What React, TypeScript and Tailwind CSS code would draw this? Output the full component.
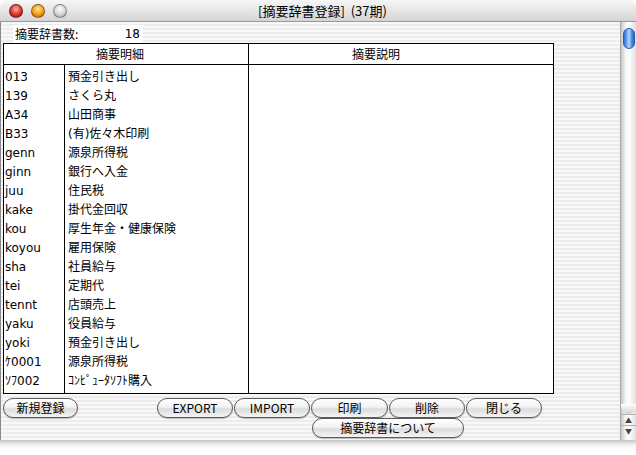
import React from "react";

type Entry = { code: string; name: string };

const entries: Entry[] = [
	{ code: "013", name: "預金引き出し" },
	{ code: "139", name: "さくら丸" },
	{ code: "A34", name: "山田商事" },
	{ code: "B33", name: "(有)佐々木印刷" },
	{ code: "genn", name: "源泉所得税" },
	{ code: "ginn", name: "銀行へ入金" },
	{ code: "juu", name: "住民税" },
	{ code: "kake", name: "掛代金回収" },
	{ code: "kou", name: "厚生年金・健康保険" },
	{ code: "koyou", name: "雇用保険" },
	{ code: "sha", name: "社員給与" },
	{ code: "tei", name: "定期代" },
	{ code: "tennt", name: "店頭売上" },
	{ code: "yaku", name: "役員給与" },
	{ code: "yoki", name: "預金引き出し" },
	{ code: "ｹ0001", name: "源泉所得税" },
	{ code: "ｿﾌ002", name: "ｺﾝﾋﾟｭｰﾀｿﾌﾄ購入" },
];

const rowFont = { fontFamily: '"DejaVu Sans", "Noto Sans CJK JP", sans-serif' };

const AquaButton: React.FC<{ label: string; className?: string }> = ({
	label,
	className = "",
}) => (
	<button
		className={`h-[20px] p-0 flex items-center justify-center whitespace-nowrap rounded-full border border-[#5a5a5a] bg-[linear-gradient(to_bottom,#ffffff_0%,#f2f2f2_45%,#dcdcdc_55%,#f4f4f4_100%)] shadow-[0_1px_1px_rgba(0,0,0,0.25)] text-[12px] leading-none text-black ${className}`}
	>
		{label}
	</button>
);

const Light: React.FC<{ tone: string }> = ({ tone }) => (
	<div
		className={`w-[14px] h-[14px] rounded-full border border-[rgba(0,0,0,0.35)] ${tone}`}
	/>
);

const Scrollbar: React.FC = () => (
	<div className="w-[16px] flex flex-col bg-[linear-gradient(to_right,#c8c8c8,#f4f4f4_30%,#ffffff_55%,#e0e0e0_100%)] border-l border-[#a8a8a8]">
		<div className="mx-auto mt-[6px] w-[12px] h-[21px] rounded-full border border-[#2a5aa8] bg-[linear-gradient(to_right,#2b6fd6,#7fb4f5_35%,#b9dafc_50%,#4f92ea_75%,#2662c8)]" />
		<div className="flex-1" />
		<div className="h-[10px] rounded-b-full bg-[linear-gradient(to_bottom,#ffffff,#d0d0d0)]" />
		<div className="h-[11px] flex items-center justify-center border-t border-[#b0b0b0] text-[7px] leading-none text-[#444]">
			▲
		</div>
		<div className="h-[11px] flex items-center justify-center border-t border-[#b0b0b0] text-[7px] leading-none text-[#444]">
			▼
		</div>
		<div className="h-[4px]" />
	</div>
);

export default function App() {
	return (
		<div
			className="w-[636px] h-[455px] flex flex-col bg-white overflow-hidden text-black"
			style={{ fontFamily: '"Noto Sans CJK JP", "Liberation Sans", sans-serif' }}
		>
			<div className="h-[22px] flex items-center relative rounded-t-[7px] border-b border-[#9a9a9a] bg-[linear-gradient(to_bottom,#f6f6f6,#e6e6e6_50%,#d4d4d4)]">
				<div className="flex items-center gap-[8px] pl-[9px]">
					<Light tone="bg-[radial-gradient(circle_at_50%_35%,#ffb0a8,#d8322a_55%,#8a1410)]" />
					<Light tone="bg-[radial-gradient(circle_at_50%_35%,#ffe7a0,#f39a12_55%,#a85a00)]" />
					<Light tone="bg-[radial-gradient(circle_at_50%_35%,#ffffff,#d4d4d4_55%,#9a9a9a)]" />
				</div>
				<div className="flex-1 text-center text-[13px] leading-none pr-[58px] whitespace-pre">
					[摘要辞書登録]  (37期)
				</div>
			</div>

			<div className="h-[418px] flex border-l border-[#8a8a8a] bg-[repeating-linear-gradient(to_bottom,#f8f8f8_0px,#f8f8f8_2px,#ececec_2px,#ececec_4px)]">
				<div className="flex-1 flex flex-col pl-[2px]">
					<div className="h-[21px] pt-[3px] pl-[10px]">
						<div className="w-[130px] h-[18px] bg-white flex items-center justify-between px-[2px] text-[12px]">
							<span>摘要辞書数:</span>
							<span className="pr-[1px]" style={rowFont}>
								18
							</span>
						</div>
					</div>

					<div className="w-[551px] h-[351px] border border-black bg-white flex flex-col">
						<div className="h-[21px] flex border-b border-black text-[12px]">
							<div className="w-[245px] border-r border-black flex items-center justify-center pr-[12px]">
								摘要明細
							</div>
							<div className="flex-1 flex items-center justify-center pr-[50px]">
								摘要説明
							</div>
						</div>
						<div className="flex-1 flex overflow-hidden" style={rowFont}>
							<div className="w-[245px] flex border-r border-black">
								<div className="w-[61px] border-r border-black pt-[3px]">
									{entries.map((e) => (
										<div
											key={e.code}
											className="h-[19px] pl-[1px] text-[12px] leading-[19px] whitespace-nowrap"
										>
											{e.code}
										</div>
									))}
								</div>
								<div className="flex-1 pt-[3px]">
									{entries.map((e) => (
										<div
											key={e.code}
											className="h-[19px] pl-[3px] text-[12px] leading-[19px] whitespace-nowrap"
										>
											{e.name}
										</div>
									))}
								</div>
							</div>
							<div className="flex-1" />
						</div>
					</div>

					<div className="flex items-center mt-[4px] h-[20px]">
						<AquaButton label="新規登録" className="w-[75px]" />
						<div className="w-[79px]" />
						<div className="flex gap-[1px]">
							<AquaButton label="EXPORT" className="w-[76px]" />
							<AquaButton label="IMPORT" className="w-[76px]" />
							<AquaButton label="印刷" className="w-[77px]" />
							<AquaButton label="削除" className="w-[76px]" />
							<AquaButton label="閉じる" className="w-[76px]" />
						</div>
					</div>
					<div className="flex pl-[309px] h-[20px]">
						<AquaButton label="摘要辞書について" className="w-[152px]" />
					</div>
				</div>
				<Scrollbar />
			</div>

			<div className="h-[15px] bg-[linear-gradient(to_bottom,#c4c4c4,#efefef_30%,#ffffff_60%)]" />
		</div>
	);
}
